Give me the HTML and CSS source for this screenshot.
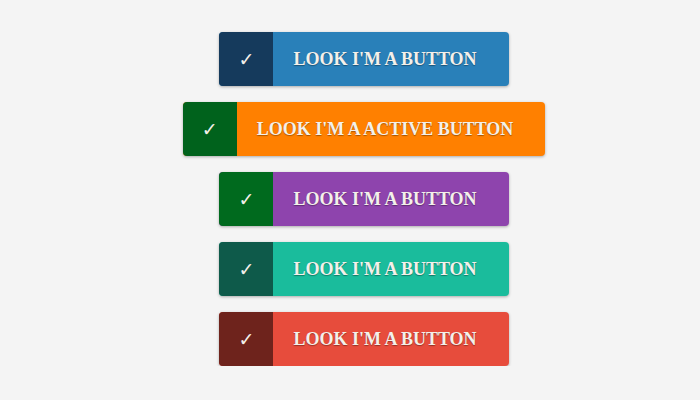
FILE: index.html
```html
<!DOCTYPE html>
<html lang="en">
<head>
    <meta charset="UTF-8">
    <meta name="viewport" content="width=device-width, initial-scale=1.0">
    <title>Buttons</title>
    <link rel="stylesheet" href="styles.css">
</head>
<body>
    <div class="button-list">
        <a href="#" class="btn btn-blue"><span class="btn-icon">&#10003;</span><span class="btn-label">Look I'm a button</span></a>
        <a href="#" class="btn btn-orange"><span class="btn-icon">&#10003;</span><span class="btn-label">Look I'm a active button</span></a>
        <a href="#" class="btn btn-purple"><span class="btn-icon">&#10003;</span><span class="btn-label">Look I'm a button</span></a>
        <a href="#" class="btn btn-teal"><span class="btn-icon">&#10003;</span><span class="btn-label">Look I'm a button</span></a>
        <a href="#" class="btn btn-red"><span class="btn-icon">&#10003;</span><span class="btn-label">Look I'm a button</span></a>
    </div>
</body>
</html>
```

FILE: styles.css
```css
body {
    font-family: "Liberation Serif", "DejaVu Serif", serif;
    background-color: #f4f4f4;
    margin: 0;
    padding: 0;
}
.button-list {
    display: flex;
    flex-direction: column;
    align-items: center;
    gap: 16px;
    padding: 32px 0 0 28px;
}
.btn {
    display: flex;
    height: 54px;
    border-radius: 4px;
    overflow: hidden;
    text-decoration: none;
    color: #f4f0ea;
    box-shadow: 0 1px 3px rgba(0, 0, 0, 0.3);
}
.btn-icon {
    width: 54px;
    display: flex;
    align-items: center;
    justify-content: center;
    font-family: "DejaVu Sans", sans-serif;
    font-size: 19px;
}
.btn-label {
    display: flex;
    align-items: center;
    padding: 0 32px 0 20px;
    font-size: 18px;
    font-weight: bold;
    text-transform: uppercase;
    text-shadow: 0 1px 1px rgba(0, 0, 0, 0.35);
}
.btn-blue { background-color: #2980b9; }
.btn-blue .btn-icon { background-color: #153a5c; }
.btn-orange { background-color: #ff8000; }
.btn-orange .btn-icon { background-color: #00621c; }
.btn-purple { background-color: #8e44ad; }
.btn-purple .btn-icon { background-color: #006a1e; }
.btn-teal { background-color: #1abc9c; }
.btn-teal .btn-icon { background-color: #0e5a4a; }
.btn-red { background-color: #e74c3c; }
.btn-red .btn-icon { background-color: #6e231c; }
```
